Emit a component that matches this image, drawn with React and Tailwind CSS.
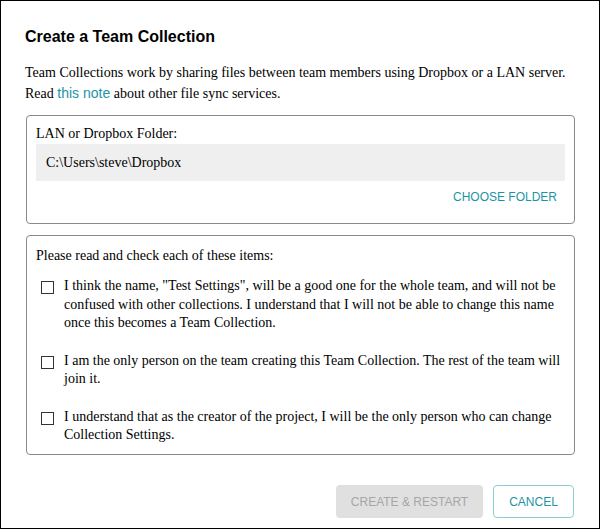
import { useState } from 'react';

const serif = { fontFamily: '"Liberation Serif", "Times New Roman", serif' };
const sans = { fontFamily: '"Liberation Sans", Arial, sans-serif' };

const items = [
  'I think the name, "Test Settings", will be a good one for the whole team, and will not be confused with other collections. I understand that I will not be able to change this name once this becomes a Team Collection.',
  'I am the only person on the team creating this Team Collection. The rest of the team will join it.',
  'I understand that as the creator of the project, I will be the only person who can change Collection Settings.',
];

function CheckItem({ text, checked, onToggle }) {
  return (
    <label className="flex items-start gap-[10px] cursor-pointer">
      <span
        onClick={onToggle}
        className="mt-[4px] ml-[5px] h-[13px] w-[13px] shrink-0 border border-[#333] bg-white"
      >
        {checked ? <span className="block h-full w-full bg-[#1d94a4]" /> : null}
      </span>
      <span className="text-[14px] leading-[18.5px] text-black">{text}</span>
    </label>
  );
}

export default function App() {
  const [checks, setChecks] = useState([false, false, false]);
  const allChecked = checks.every(Boolean);

  return (
    <div className="w-[600px] h-[529px] border border-black bg-white" style={sans}>
      <div className="flex h-full flex-col px-[24px] pt-[26px] pb-[10px]">
        <h1 className="text-[16px] font-bold leading-[20px] text-black">Create a Team Collection</h1>

        <p className="mt-[16px] text-[14px] leading-[20px] text-black" style={serif}>
          <span className="whitespace-nowrap">
            Team Collections work by sharing files between team members using Dropbox or a LAN server.
          </span>
          <br />
          Read{' '}
          <a className="text-[#1d94a4]" style={sans}>
            this note
          </a>{' '}
          about other file sync services.
        </p>

        <div className="mt-[11px] ml-[1px] w-[549px] rounded-[4px] border border-[#8a8a8a] px-[9px] pt-[8px] pb-[18px]" style={serif}>
          <div className="text-[14px] leading-[19px] text-black">LAN or Dropbox Folder:</div>
          <div className="mt-[1px] flex h-[37px] items-center bg-[#efefef] px-[10px] text-[14px] text-black">
            C:\Users\steve\Dropbox
          </div>
          <div className="mt-[8px] flex justify-end pr-[8px]">
            <button type="button" className="text-[12px] leading-[16px] text-[#1d94a4]" style={sans}>
              CHOOSE FOLDER
            </button>
          </div>
        </div>

        <div className="mt-[11px] ml-[1px] w-[549px] rounded-[4px] border border-[#8a8a8a] px-[9px] pt-[10px] pb-[9px]" style={serif}>
          <div className="text-[14px] leading-[19px] text-black">Please read and check each of these items:</div>
          <div className="mt-[12px] flex flex-col gap-[19px]">
            {items.map((t, i) => (
              <CheckItem
                key={i}
                text={t}
                checked={checks[i]}
                onToggle={() => setChecks((c) => c.map((v, j) => (j === i ? !v : v)))}
              />
            ))}
          </div>
        </div>

        <div className="mt-auto flex justify-end gap-[10px] pr-[1px]">
          <button
            type="button"
            disabled={!allChecked}
            className="h-[33px] w-[147px] rounded-[4px] bg-[#e0e0e0] text-[12px] text-[#a6a6a6]"
          >
            CREATE &amp; RESTART
          </button>
          <button
            type="button"
            className="h-[33px] w-[81px] rounded-[4px] border border-[#8ccdd6] text-[12px] text-[#1d94a4]"
          >
            CANCEL
          </button>
        </div>
      </div>
    </div>
  );
}
